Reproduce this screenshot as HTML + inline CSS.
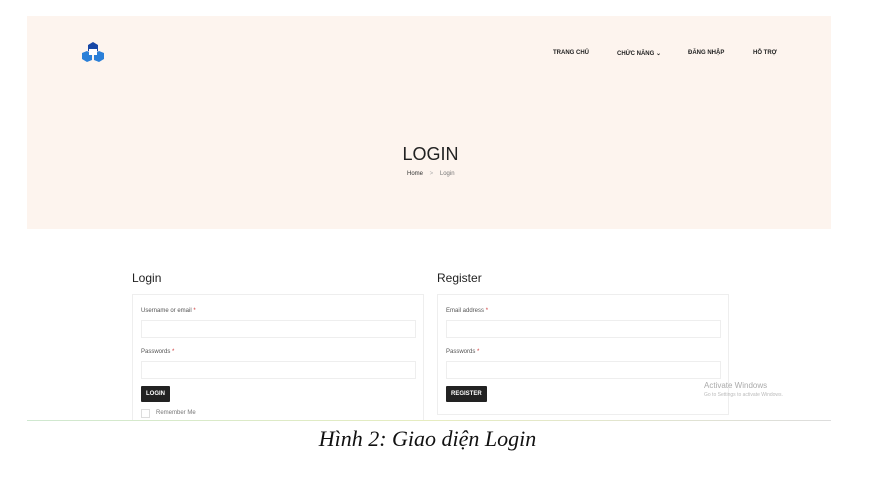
<!DOCTYPE html>
<html><head><meta charset="utf-8"><style>
*{margin:0;padding:0;box-sizing:border-box}
body{width:875px;height:480px;background:#fff;position:relative;overflow:hidden;font-family:"Liberation Sans",sans-serif}
.hero{position:absolute;left:27px;top:16px;width:804px;height:213px;background:#fdf4ee}
.nav{position:absolute;top:50px;font-size:6px;font-weight:bold;color:#222}
.t{position:absolute;color:#222}
.box{position:absolute;border:1px solid #eee;background:#fff}
.lab{position:absolute;font-size:6px;color:#555}
.inp{position:absolute;border:1px solid #eee;height:18px;width:275px}
.btn{position:absolute;background:#222;color:#fff;font-size:6px;font-weight:bold;height:16px;line-height:16px;padding:0 5px;border-radius:1px}
.clip{position:absolute;left:0;top:420px;width:875px;height:60px;background:#fff}
</style></head><body>
<div class="hero"></div>
<svg style="position:absolute;left:82px;top:42px" width="22" height="20" viewBox="0 0 22 20">
<polygon points="11,0 16,3 16,9 11,12 6,9 6,3" fill="#1747a6"/>
<polygon points="5,9 10,12 10,18 5,20 0,17 0,11" fill="#2a7fd8"/>
<polygon points="17,9 22,11 22,17 17,20 12,18 12,12" fill="#2a7fd8"/>
<rect x="7" y="7" width="8" height="6" fill="#fff"/>
</svg>
<div class="nav" style="left:553px">TRANG CHỦ</div>
<div class="nav" style="left:617px">CHỨC NĂNG ⌄</div>
<div class="nav" style="left:688px">ĐĂNG NHẬP</div>
<div class="nav" style="left:753px">HỖ TRỢ</div>
<div class="t" style="left:0;width:861px;text-align:center;top:144px;font-size:18px">LOGIN</div>
<div class="t" style="left:407px;top:171px;font-size:6px;color:#333">Home <span style="color:#aaa;margin:0 5px">&gt;</span> <span style="color:#777">Login</span></div>
<div class="t" style="left:132px;top:271px;font-size:12px">Login</div>
<div class="t" style="left:437px;top:271px;font-size:12px">Register</div>
<div class="box" style="left:132px;top:294px;width:292px;height:140px"></div>
<div class="box" style="left:437px;top:294px;width:292px;height:121px"></div>
<div class="lab" style="left:141px;top:308px">Username or email <span style="color:#c33">*</span></div>
<div class="inp" style="left:141px;top:320px"></div>
<div class="lab" style="left:141px;top:349px">Passwords <span style="color:#c33">*</span></div>
<div class="inp" style="left:141px;top:361px"></div>
<div class="btn" style="left:141px;top:386px">LOGIN</div>
<div style="position:absolute;left:141px;top:409px;width:9px;height:9px;border:1px solid #ddd"></div>
<div class="lab" style="left:156px;top:410px;color:#777">Remember Me</div>
<div class="lab" style="left:446px;top:308px">Email address <span style="color:#c33">*</span></div>
<div class="inp" style="left:446px;top:320px"></div>
<div class="lab" style="left:446px;top:349px">Passwords <span style="color:#c33">*</span></div>
<div class="inp" style="left:446px;top:361px"></div>
<div class="btn" style="left:446px;top:386px">REGISTER</div>
<div class="t" style="left:704px;top:381px;font-size:8px;color:#aaa">Activate Windows</div>
<div class="t" style="left:704px;top:392px;font-size:5px;color:#bbb">Go to Settings to activate Windows.</div>
<div class="clip"></div>
<div style="position:absolute;left:27px;top:420px;width:804px;height:1px;background:linear-gradient(90deg,#cfe8d0,#e6ecc0,#ddd)"></div>
<div class="t" style="left:0;width:855px;text-align:center;top:426px;font-family:'Liberation Serif',serif;font-style:italic;font-size:22px;color:#111">Hình 2: Giao diện Login</div>
</body></html>
